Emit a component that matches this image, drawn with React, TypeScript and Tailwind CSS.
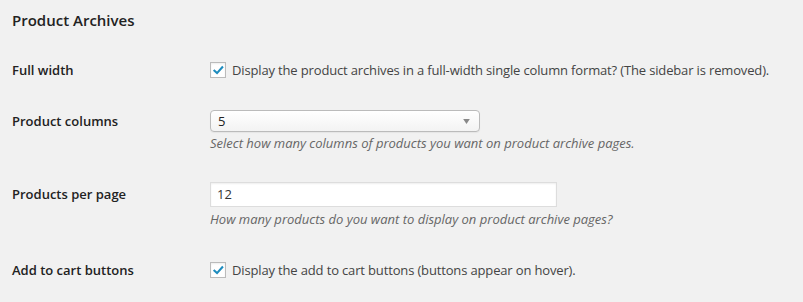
import type { ReactNode } from "react";

function Check() {
  return (
    <span className="flex h-4 w-4 shrink-0 items-center justify-center border border-[#bbb] bg-white shadow-[inset_0_1px_2px_rgba(0,0,0,0.07)]">
      <svg viewBox="0 0 16 16" className="h-[13px] w-[13px]">
        <path d="M3 8.2 L6.2 11.2 L12.6 4" fill="none" stroke="#1e8cbe" strokeWidth="2.6" strokeLinecap="square" />
      </svg>
    </span>
  );
}

function Row({ label, children, className = "" }: { label: string; children: ReactNode; className?: string }) {
  return (
    <div className={`flex ${className}`}>
      <div className="w-[198px] shrink-0 text-[13px] font-semibold text-[#222]">{label}</div>
      <div className="flex-1">{children}</div>
    </div>
  );
}

export default function App() {
  return (
    <div className="h-[302px] w-[803px] overflow-hidden bg-[#f1f1f1] pl-3 text-[#444] [font-family:'Open_Sans',sans-serif]">
      <h3 className="mt-[8px] text-[15px] font-semibold leading-[24px] text-[#222]">Product Archives</h3>

      <Row label="Full width" className="mt-[28px] leading-[20px]">
        <label className="flex items-center gap-[6px] whitespace-nowrap text-[13px] leading-[20px] tracking-[-0.15px]">
          <Check />
          <span>Display the product archives in a full-width single column format? (The sidebar is removed).</span>
        </label>
      </Row>

      <Row label="Product columns" className="mt-[30px] leading-[22px]">
        <div className="relative flex h-[22px] w-[270px] items-center rounded-[4px] border border-[#bbb] bg-gradient-to-b from-white to-[#f3f3f3] pl-[7px] text-[13px] text-[#222] shadow-[0_1px_1px_rgba(0,0,0,0.05)]">
          5
          <svg viewBox="0 0 8 6" className="absolute right-[9px] top-[8px] h-[5px] w-[7px]">
            <path d="M0 0 H8 L4 6 Z" fill="#888" />
          </svg>
        </div>
        <p className="mt-[2px] text-[13px] italic leading-[18px] text-[#666]">
          Select how many columns of products you want on product archive pages.
        </p>
      </Row>

      <Row label="Products per page" className="mt-[30px] leading-[25px]">
        <div className="flex h-[25px] w-[347px] items-center border border-[#ddd] bg-white pl-[6px] text-[13px] text-[#333] shadow-[inset_0_1px_2px_rgba(0,0,0,0.07)]">
          12
        </div>
        <p className="mt-[3px] text-[13px] italic leading-[18px] text-[#666]">
          How many products do you want to display on product archive pages?
        </p>
      </Row>

      <Row label="Add to cart buttons" className="mt-[32px] leading-[20px]">
        <label className="flex items-center gap-[6px] whitespace-nowrap text-[13px] leading-[20px] tracking-[-0.15px]">
          <Check />
          <span>Display the add to cart buttons (buttons appear on hover).</span>
        </label>
      </Row>
    </div>
  );
}
